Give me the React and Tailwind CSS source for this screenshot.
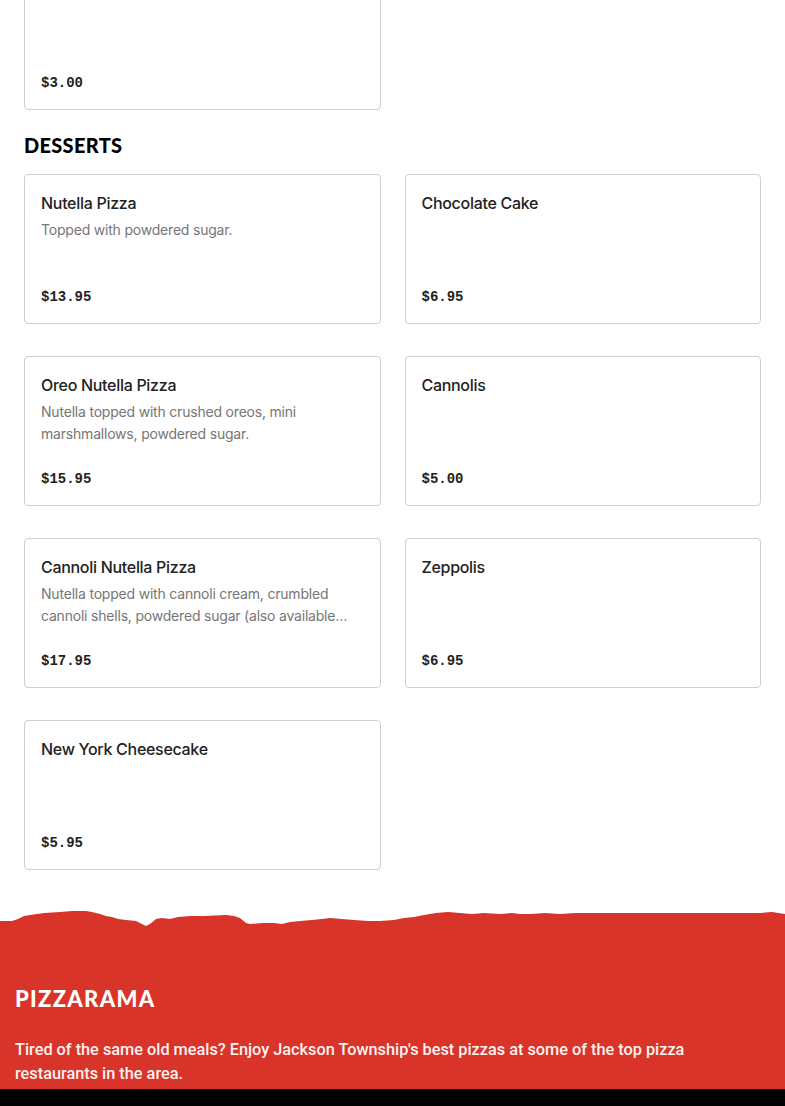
import React from "react";

const desserts = [
  { name: "Nutella Pizza", desc: "Topped with powdered sugar.", price: "$13.95" },
  { name: "Chocolate Cake", desc: "", price: "$6.95" },
  {
    name: "Oreo Nutella Pizza",
    desc: "Nutella topped with crushed oreos, mini marshmallows, powdered sugar.",
    price: "$15.95",
  },
  { name: "Cannolis", desc: "", price: "$5.00" },
  {
    name: "Cannoli Nutella Pizza",
    desc: "Nutella topped with cannoli cream, crumbled cannoli shells, powdered sugar (also available with chocolate chips).",
    price: "$17.95",
  },
  { name: "Zeppolis", desc: "", price: "$6.95" },
  { name: "New York Cheesecake", desc: "", price: "$5.95" },
];

const MenuCard = ({ item, className = "" }) => (
  <div
    className={
      "flex h-[150px] flex-col rounded-[4px] border border-[#cfcfcf] bg-white px-4 pt-4 pb-4 " +
      className
    }
  >
    <div className="text-[16px] leading-6 font-medium text-[#222] font-['Inter',sans-serif] tracking-[-0.3px]">
      {item.name}
    </div>
    {item.desc && (
      <p className="mt-[4px] line-clamp-2 text-[14px] leading-[22px] text-[#767676] font-['Inter',sans-serif] tracking-[-0.2px]">
        {item.desc}
      </p>
    )}
    <div className="mt-auto text-[14px] leading-5 font-bold text-[#222] font-['Liberation_Mono',monospace]">
      {item.price}
    </div>
  </div>
);

const TornEdge = () => (
  <svg
    className="block h-[26px] w-full"
    viewBox="0 0 785 26"
    preserveAspectRatio="none"
  >
    <path
      fill="#d9342a"
      d="M0 15 L12 15 L18 13 L24 10 L30 9 L44 7 L60 6 L72 5 L86 5 L92 6 L100 8 L106 10 L112 11 L118 13 L126 14 L136 15 L142 18 L146 20 L150 18 L156 13 L162 12 L170 13 L178 11 L190 10 L204 10 L226 9 L234 10 L240 12 L246 17 L250 18 L262 17 L274 17 L282 18 L290 16 L300 15 L312 14 L322 13 L330 12 L342 13 L354 14 L368 15 L380 15 L394 14 L404 12 L414 11 L424 9 L436 7 L448 6 L460 7 L472 8 L484 7 L500 8 L512 7 L520 8 L530 8 L545 7 L560 8 L575 7 L590 7 L610 7 L640 7 L670 7 L700 7 L730 7 L760 7 L772 6 L785 8 L785 26 L0 26 Z"
    />
  </svg>
);

export default function App() {
  return (
    <div className="min-h-[1106px] overflow-hidden bg-white">
      <div className="px-6">
        <div className="grid grid-cols-2 gap-x-6">
          <MenuCard item={{ name: "", desc: "", price: "$3.00" }} className="-mt-[40px]" />
        </div>

        <h2 className="mt-[21px] text-[20px] leading-7 font-black uppercase tracking-[0.3px] text-black font-['Lato',sans-serif]">
          Desserts
        </h2>

        <div className="mt-[15px] grid grid-cols-2 gap-x-6 gap-y-8">
          {desserts.map((d) => (
            <MenuCard key={d.name} item={d} />
          ))}
        </div>
      </div>

      <div className="mt-[36px]">
        <TornEdge />
        <div className="bg-[#d9342a] px-[15px] pt-[53px] pb-[3px]">
          <h3 className="text-[22px] leading-7 font-black uppercase tracking-[1.3px] text-white font-['Lato',sans-serif]">
            Pizzarama
          </h3>
          <p className="mt-[25px] max-w-[700px] text-[16.3px] leading-6 font-medium text-[#fdf1ef] font-['Roboto',sans-serif]">
            Tired of the same old meals? Enjoy Jackson Township's best pizzas at
            some of the top pizza restaurants in the area.
          </p>
        </div>
        <div className="h-[40px] bg-black" />
      </div>
    </div>
  );
}
